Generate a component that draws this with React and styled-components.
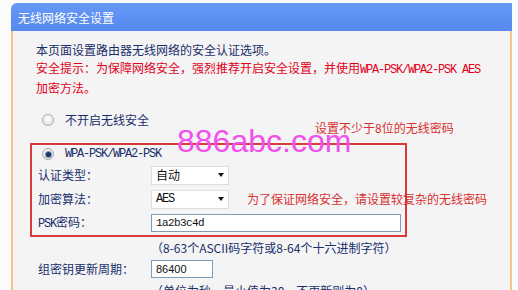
import React from 'react';
import styled, { createGlobalStyle } from 'styled-components';

const GlobalStyle = createGlobalStyle`
  html, body {
    margin: 0;
    padding: 0;
    background: #fbfbfb;
  }
  body {
    font-family: "Noto Sans CJK SC", "Liberation Sans", sans-serif;
    font-size: 12px;
  }
`;

const Page = styled.div`
  position: relative;
  width: 518px;
  height: 290px;
  overflow: hidden;
  padding: 3px 0 0 11px;
  box-sizing: border-box;
`;

const Panel = styled.div`
  width: 501px;
  display: flex;
  flex-direction: column;
`;

const Header = styled.div`
  height: 28px;
  display: flex;
  align-items: center;
  padding-left: 7px;
  border-top-left-radius: 6px;
  background: linear-gradient(#6699f5, #5688ef);
  color: #fff;
  font-size: 12px;
`;

const Body = styled.div`
  background: #f4f4f4;
  border-left: 2px solid #f4c68c;
  border-right: 2px solid #f4c68c;
  padding: 10px 0 30px 23px;
  color: #1a2e6c;
  line-height: 18px;
`;

const Intro = styled.div`
  white-space: nowrap;
`;

const Warning = styled.div`
  color: #e3001b;
  white-space: nowrap;
`;

const Mono = styled.span`
  font-family: "Liberation Mono", "DejaVu Sans Mono", monospace;
  font-size: 12px;
  letter-spacing: -1.2px;
`;

const Options = styled.div`
  display: flex;
  flex-direction: column;
  gap: 12px;
  padding-top: 12px;
`;

const RadioRow = styled.div`
  display: flex;
  align-items: center;
  gap: 11px;
  height: ${(p) => p.$h || 22}px;
  padding-left: 6px;
`;

const Radio = styled.span`
  width: 12px;
  height: 12px;
  flex: none;
  box-sizing: border-box;
  border-radius: 50%;
  border: 1px solid #a8a8a8;
  background: radial-gradient(circle at 50% 40%, #ffffff 0, #e2e2e2 85%);
  display: flex;
  align-items: center;
  justify-content: center;

  &::after {
    content: '';
    width: 5px;
    height: 5px;
    border-radius: 50%;
    background: ${(p) => (p.$checked ? '#1d3563' : 'transparent')};
    box-shadow: ${(p) => (p.$checked ? '0 0 0 1px #7d97c4' : 'none')};
  }
`;

const Group = styled.div`
  width: 377px;
  margin-left: -6px;
  box-sizing: border-box;
  border: 2px solid #d93b3b;
  padding-left: 4px;
  display: flex;
  flex-direction: column;
`;

const Field = styled.div`
  display: flex;
  align-items: center;
  height: ${(p) => p.$h || 24}px;
  margin-top: ${(p) => p.$mt || 0}px;
`;

const Label = styled.span`
  width: 115px;
  flex: none;
  box-sizing: border-box;
  padding-left: 2px;
`;

const Select = styled.div`
  width: 78px;
  height: 19px;
  box-sizing: border-box;
  background: #fff;
  border: 1px solid #dedede;
  display: flex;
  align-items: center;
  justify-content: space-between;
  padding: 0 4px 0 4px;
  color: #111;

  &::after {
    content: '';
    border-left: 3.5px solid transparent;
    border-right: 3.5px solid transparent;
    border-top: 4px solid #111;
  }
`;

const TextInput = styled.input`
  width: ${(p) => p.$w}px;
  height: 18px;
  box-sizing: border-box;
  margin: 0;
  border: 1px solid #7f9db9;
  background: #fff;
  padding: 0 0 0 4px;
  color: #111;
  font-family: ${(p) =>
    p.$mono ? '"Liberation Mono", monospace' : '"Liberation Sans", Arial, sans-serif'};
  font-size: ${(p) => (p.$mono ? '11px' : '11px')};
  letter-spacing: ${(p) => (p.$mono ? '-0.6px' : '0')};
  outline: none;
`;

const Hint = styled.div`
  margin-left: 115px;
  margin-top: ${(p) => p.$mt || 0}px;
  height: 18px;
  white-space: nowrap;
`;

const Watermark = styled.div`
  position: absolute;
  left: 177px;
  top: 125px;
  font-family: "Liberation Sans", Arial, sans-serif;
  font-size: 32px;
  line-height: 32px;
  color: #f050ec;
  pointer-events: none;
`;

const Note = styled.div`
  position: absolute;
  left: ${(p) => p.$x}px;
  top: ${(p) => p.$y}px;
  color: #d83030;
  font-size: 12px;
  line-height: 16px;
  white-space: nowrap;
`;

export default function App() {
  return (
    <Page>
      <GlobalStyle />
      <Panel>
        <Header>无线网络安全设置</Header>
        <Body>
          <Intro>本页面设置路由器无线网络的安全认证选项。</Intro>
          <Warning>
            安全提示：为保障网络安全，强烈推荐开启安全设置，并使用<Mono>WPA-PSK/WPA2-PSK AES</Mono>
            <br />
            加密方法。
          </Warning>
          <Options>
            <RadioRow>
              <Radio />
              不开启无线安全
            </RadioRow>
            <Group>
              <RadioRow $h={18}>
                <Radio $checked />
                <Mono>WPA-PSK/WPA2-PSK</Mono>
              </RadioRow>
              <Field>
                <Label>认证类型：</Label>
                <Select>自动</Select>
              </Field>
              <Field>
                <Label>加密算法：</Label>
                <Select>
                  <Mono>AES</Mono>
                </Select>
              </Field>
              <Field>
                <Label>
                  <Mono>PSK</Mono>密码：
                </Label>
                <TextInput $w={250} $mono readOnly value="1a2b3c4d" />
              </Field>
            </Group>
          </Options>
          <Hint $mt={2}>（8-63个ASCII码字符或8-64个十六进制字符）</Hint>
          <Field $h={22} $mt={1}>
            <Label>组密钥更新周期：</Label>
            <TextInput $w={62} readOnly value="86400" />
          </Field>
          <Hint $mt={2}>（单位为秒，最小值为30，不更新则为0）</Hint>
        </Body>
      </Panel>
      <Watermark>886abc.com</Watermark>
      <Note $x={315} $y={120}>设置不少于8位的无线密码</Note>
      <Note $x={247} $y={191}>为了保证网络安全，请设置较复杂的无线密码</Note>
    </Page>
  );
}
